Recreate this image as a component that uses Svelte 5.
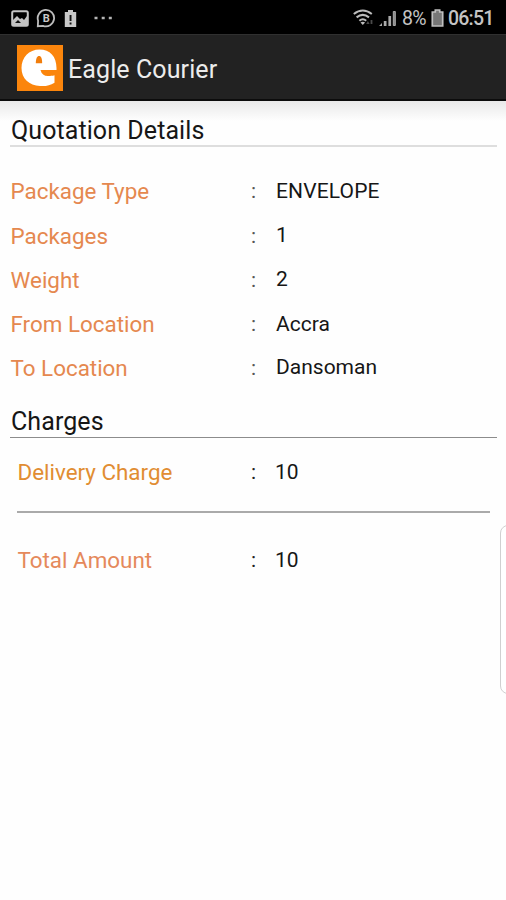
<script>
  const details = [
    { label: 'Package Type', value: 'ENVELOPE', name: 'type' },
    { label: 'Packages', value: '1', name: 'packages' },
    { label: 'Weight', value: '2', name: 'weight' },
    { label: 'From Location', value: 'Accra', name: 'from' },
    { label: 'To Location', value: 'Dansoman', name: 'to' },
  ];
</script>

<div class="screen">
  <div class="status">
    <div class="notifications">
      <svg width="18" height="17" viewBox="0 0 18 17">
        <rect x="1.2" y="1.2" width="15.6" height="14.6" rx="1.5" fill="none" stroke="#c4c4c4" stroke-width="2" />
        <path d="M2 10l4-4 3 3 2-1 2 2 3-4v10H2z" fill="#c4c4c4" />
        <path d="M4 13l3-3 3 3z" fill="#111" />
      </svg>
      <svg width="20" height="20" viewBox="0 0 20 20">
        <path d="M1.8 18.2l.3-5.500A8.200 8.200 0 1 1 7 17.800z" fill="none" stroke="#bdbdbd" stroke-width="1.8" />
        <text x="10.2" y="13.9" text-anchor="middle" font-size="11" font-weight="700" fill="#c8c8c8">B</text>
      </svg>
      <svg width="13" height="19" viewBox="0 0 13 19">
        <path d="M4 1h5v2h3.200v15H.8V3H4z" fill="#c8c8c8" />
        <path d="M5.600 6h1.900v6H5.600zM5.600 13.500h1.900v2H5.600z" fill="#111" />
      </svg>
      <svg class="dots" width="20" height="4" viewBox="0 0 20 4">
        <path d="M.5.7h3v2.600h-3zM7.700.7h3v2.600h-3zM14.800.7h3v2.600h-3z" fill="#b5b5b5" />
      </svg>
    </div>
    <div class="system">
      <svg width="22" height="18" viewBox="0 0 22 18">
        <g fill="none" stroke="#bcbcbc" stroke-width="2">
          <path d="M.8 5q9-7 18 0M3.600 8.400q6.200-5 12.400 0M6.400 11.700q3.400-3 6.800 0" />
        </g>
        <path d="M7.500 13.400q2.300-1.500 4.600 0L9.800 16z" fill="#bcbcbc" />
        <path d="M13.200 15l1.700-3 1.700 3zM17.600 11h1.800v4h-1.800z" fill="#4a4a4a" />
      </svg>
      <svg class="signal" width="18" height="17" viewBox="0 0 18 17">
        <path d="M0 16l3-3v3zM4.800 11h2.700v5H4.800zM9.400 6h2.700v10H9.400z" fill="#aaa" />
        <path d="M14.300 1.500h2v14h-2z" fill="#888" stroke="#aaa" />
      </svg>
      <span class="percent">8%</span>
      <svg class="battery" width="13" height="18" viewBox="0 0 13 18">
        <path d="M4.300 1h4.400v2h3v14H1.300V3h3z" fill="#777" stroke="#c0c0c0" stroke-width="1.7" />
      </svg>
      <span class="clock">06:51</span>
    </div>
  </div>

  <header>
    <svg class="logo" width="46" height="46" viewBox="0 0 46 46">
      <rect width="46" height="46" fill="#fb850c" />
      <path
        d="M39.500 25H23.500c1 4 3.500 6 7.500 6 2.500 0 4.500-.2 6.500-.8v7.500C33 40.500 28.500 41.500 23 41 12 40.500 4.500 33.500 4.500 23S12 4.500 22.500 4.500s17 7 17 18.500z"
        fill="#fff"
      />
      <path d="M18.800 18.300c0-4.800 1.300-7.300 3.300-7.300s3.200 2.600 3 7.300z" fill="#f17d0c" />
    </svg>
    <h1>Eagle Courier</h1>
  </header>

  <main>
    <h2 class="quotation">Quotation Details</h2>
    <div class="details">
      {#each details as row}
        <div class="row {row.name}">
          <span class="label">{row.label}</span>
          <span class="colon">:</span>
          <span class="value">{row.value}</span>
        </div>
      {/each}
    </div>

    <h2 class="charges">Charges</h2>
    <div class="row delivery">
      <span class="label">Delivery Charge</span>
      <span class="colon">:</span>
      <span class="value">10</span>
    </div>
    <div class="row total">
      <span class="label">Total Amount</span>
      <span class="colon">:</span>
      <span class="value">10</span>
    </div>
  </main>

  <div class="edge-handle"></div>
</div>

<style>
  :global(body) {
    margin: 0;
    background: #fefefe;
  }

  .screen {
    position: relative;
    width: 506px;
    height: 900px;
    overflow: hidden;
    background: #fefefe;
    color: #161616;
    font-family: Roboto, sans-serif;
  }

  .status {
    display: flex;
    justify-content: space-between;
    height: 34px;
    box-sizing: border-box;
    padding: 0 12px 0 11px;
    background: #000;
    color: #c4c4c4;
  }

  .notifications,
  .system {
    display: flex;
    align-items: center;
    height: 36px;
  }

  .notifications svg {
    margin-right: 6.5px;
  }

  .notifications svg:nth-child(2) {
    margin-right: 8px;
  }

  .notifications .dots {
    margin-left: 10.5px;
  }

  .signal {
    margin-left: 4px;
  }

  .percent {
    width: 24px;
    margin-left: 5px;
    font-size: 19.5px;
    letter-spacing: -0.8px;
  }

  .battery {
    margin: 0 4px 0 5px;
  }

  .clock {
    width: 46px;
    font-size: 19.5px;
    font-weight: 500;
    letter-spacing: -0.8px;
  }

  header {
    display: flex;
    align-items: center;
    box-sizing: border-box;
    height: 67px;
    padding: 2px 17px 0;
    border-top: 1px solid #303030;
    border-bottom: 2px solid #0c0c0c;
    background: #222;
  }

  h1 {
    margin: 3px 0 0 5px;
    color: #ececec;
    font-size: 25px;
    font-weight: 400;
    letter-spacing: 0.1px;
  }

  main {
    height: 799px;
    box-sizing: border-box;
    padding: 15px 9px 0 10px;
    background: linear-gradient(#e9e9e9, #fefefe 20px);
  }

  h2 {
    margin: 0;
    padding-left: 1px;
    font-size: 25px;
    font-weight: 400;
    line-height: 30px;
    letter-spacing: 0.08px;
  }

  .quotation {
    height: 29px;
    border-bottom: 2px solid #dedede;
  }

  .details {
    padding-top: 22px;
  }

  .row {
    display: grid;
    grid-template-columns: 241px 25px 1fr;
    align-items: center;
    height: 44.4px;
    line-height: 30px;
  }

  .label {
    padding-left: 0.5px;
    color: #e5884f;
    font-size: 22.4px;
  }

  .colon {
    color: #555;
    font-size: 21px;
  }

  .value {
    position: relative;
    top: -0.5px;
    font-size: 21px;
  }

  .type .value {
    letter-spacing: 0.15px;
  }

  .to {
    height: 42px;
  }

  .charges {
    height: 30px;
    margin-top: 18.4px;
    border-bottom: 1px solid #8c8c8c;
  }

  .delivery,
  .total {
    grid-template-columns: 234px 25px 1fr;
    margin: 0 7px;
  }

  .delivery {
    height: 75px;
    box-sizing: border-box;
    padding-bottom: 5px;
    border-bottom: 2px solid #aaa;
  }

  .delivery .label {
    color: #e18d32;
  }

  .delivery .value,
  .total .value {
    top: 0;
    left: -1px;
  }

  .delivery .colon,
  .total .colon {
    color: #222;
  }

  .total {
    height: 94px;
  }

  .total .label {
    color: #e5895b;
  }

  .edge-handle {
    position: absolute;
    top: 525px;
    right: -10px;
    width: 14px;
    height: 167px;
    border: 1px solid #d0d0d0;
    border-radius: 8px;
    background: #fff;
  }
</style>
